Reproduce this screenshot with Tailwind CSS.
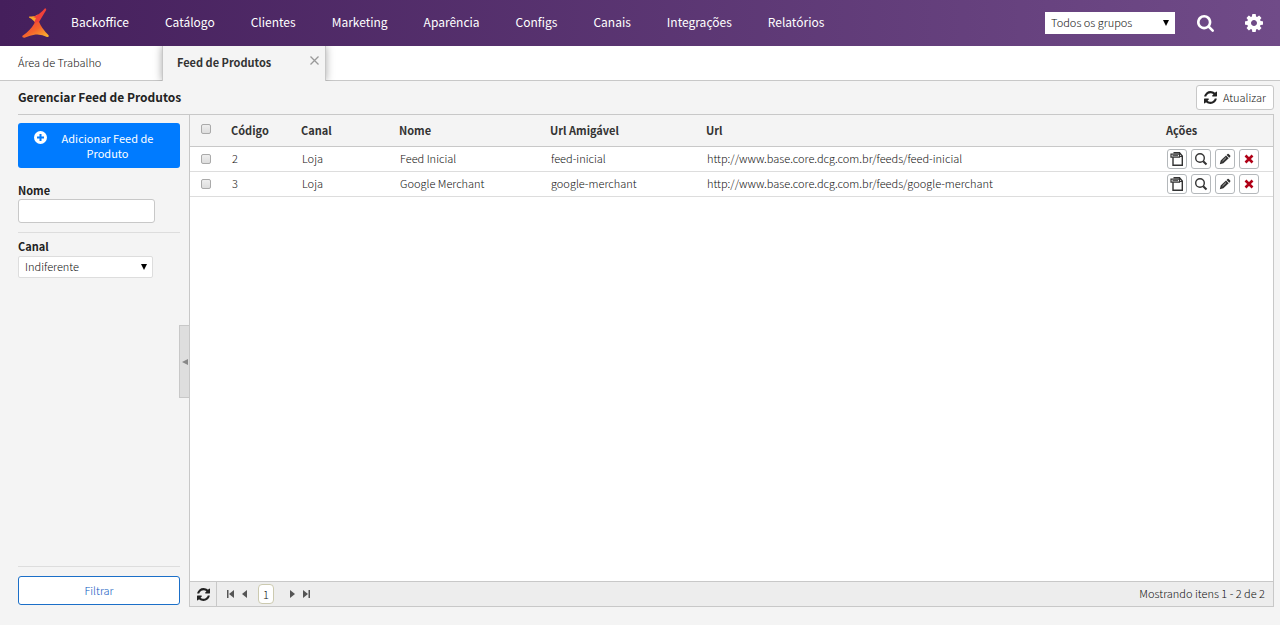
<!DOCTYPE html>
<html lang="pt-BR">
<head>
  <meta charset="UTF-8" />
  <meta name="viewport" content="width=device-width, initial-scale=1.0" />
  <title>Feed de Produtos - Backoffice</title>
  <script src="https://cdn.jsdelivr.net/npm/@tailwindcss/browser@4"></script>
</head>
<body class="flex flex-col h-screen bg-[#f4f4f4] text-[#111] text-[11px] leading-4 font-light font-['Noto_Sans_CJK_SC','Open_Sans',sans-serif]">

  <!-- Icons -->
  <svg class="hidden">
    <symbol id="refresh" viewBox="0 0 1536 1536">
      <path fill="currentColor" d="M1511 928q0 5-1 7-64 268-268 434.500T764 1536q-146 0-282.500-55T238 1324l-129 129q-19 19-45 19t-45-19-19-45V960q0-26 19-45t45-19h448q26 0 45 19t19 45-19 45l-137 137q71 66 161 102t187 36q134 0 250-65t186-179q11-17 53-117 8-23 30-23h192q13 0 22.500 9.500t9.500 22.500zm25-800v448q0 26-19 45t-45 19h-448q-26 0-45-19t-19-45 19-45l138-138Q969 256 768 256q-134 0-250 65T332 500q-11 17-53 117-8 23-30 23H50q-13 0-22.500-9.500T18 608v-7q65-268 270-434.500T768 0q146 0 284 55.500T1297 212l130-129q19-19 45-19t45 19 19 45z"/>
    </symbol>
    <symbol id="lens" viewBox="0 0 1664 1664">
      <path fill="currentColor" d="M1152 704q0-185-131.500-316.500T704 256 387.500 387.500 256 704t131.500 316.500T704 1152t316.500-131.500T1152 704zm512 832q0 52-38 90t-90 38q-54 0-90-38l-343-342q-179 124-399 124-143 0-273.500-55.500t-225-150-150-225T0 704t55.500-273.500 150-225 225-150T704 0t273.500 55.500 225 150 150 225T1408 704q0 220-124 399l343 343q37 37 37 90z"/>
    </symbol>
    <symbol id="gear" viewBox="0 0 1536 1536">
      <path fill="currentColor" d="M1024 768q0-106-75-181t-181-75-181 75-75 181 75 181 181 75 181-75 75-181zm512-109v222q0 12-8 23t-20 13l-185 28q-19 54-39 91 35 50 107 138 10 12 10 25t-9 23q-27 37-99 108t-94 71q-12 0-26-9l-138-108q-44 23-91 38-16 136-29 186-7 28-36 28H657q-14 0-24.500-8.500T621 1506l-28-184q-49-16-90-37l-141 107q-10 9-25 9-14 0-25-11-126-114-165-168-7-10-7-23 0-12 8-23 15-21 51-66.500t54-70.500q-27-50-41-99L29 913q-13-2-21-12.500T0 877V655q0-12 8-23t19-13l186-28q14-46 39-92-40-57-107-138-10-12-10-24 0-10 9-23 26-36 98.500-107.500T337 135q13 0 26 10l138 107q44-23 91-38 16-136 29-186 7-28 36-28h222q14 0 24.500 8.500T915 30l28 184q49 16 90 37l142-107q9-9 24-9 13 0 25 10 129 119 165 170 7 8 7 22 0 12-8 23-15 21-51 66.500t-54 70.500q26 50 41 98l183 28q13 2 21 12.500t8 23.500z"/>
    </symbol>
    <symbol id="page" viewBox="0 0 14 16">
      <path fill="none" stroke="currentColor" stroke-width="1.400" d="M3 6v8.300h9.300V5L9.500 1.700H3.500"/>
      <path fill="#fff" stroke="currentColor" stroke-width="1.200" d="M1 3.200h8.500v3H1z"/>
      <path fill="none" stroke="currentColor" d="M9.500 2v3.500h3M2.500 4.700h5.500"/>
    </symbol>
    <symbol id="search" viewBox="0 0 14 14">
      <circle cx="6" cy="6" r="4.300" fill="none" stroke="currentColor" stroke-width="1.400"/>
      <path stroke="currentColor" stroke-width="2" d="M9.200 9.200l3.300 3.300"/>
    </symbol>
    <symbol id="pencil" viewBox="0 0 14 14">
      <path fill="currentColor" d="M1.800 12.200l.9-3.600 5.300-5 2.700 2.700-5.300 5zM8.600 3l.9-.9q.6-.5 1.200 0l1.500 1.500q.5.600 0 1.200l-.9.900z"/>
      <path stroke="#fff" stroke-width=".6" d="M4.500 9l3.500-3.400"/>
    </symbol>
    <symbol id="cross" viewBox="0 0 10 10">
      <path fill="none" stroke="currentColor" stroke-width="2.600" d="M1.500 1.500l7 7M8.500 1.500l-7 7"/>
    </symbol>
  </svg>

  <header class="flex items-center h-[46px] shrink-0 pl-[22px] pr-[17px] bg-linear-to-r from-[#451f5c] to-[#704b88] text-white">
    <a href="#" aria-label="Início" class="shrink-0">
      <svg class="w-7 h-[30px]" viewBox="0 0 28 30">
        <defs>
          <linearGradient id="flame" x1="0" y1="0" x2="1" y2="1">
            <stop offset="0" stop-color="#f03a3a"/><stop offset=".5" stop-color="#f4652c"/><stop offset="1" stop-color="#fdc02f"/>
          </linearGradient>
        </defs>
        <path fill="#f9a72b" d="M7 9.500q-.5-1 .8-1Q13 9 16 6.500L14 16q-2-4-7-6.500z"/>
        <path fill="#f0413a" d="M23 .3q1.600 0 1.200 1.800L17 14l-4 4-.5-4.500 1.500-3.500-3-1Q18 6.500 23 .3z"/>
        <path fill="url(#flame)" d="M13 14.500L17 13.800q2.500 6.500 9.600 13.500 1 2-1.600 1.700-5-3-11.500-2.500-5.500 1-11 3.300Q0 30 .2 28 8 23 13 14.500z"/>
      </svg>
    </a>
    <nav class="flex gap-9 ml-[21px] pb-0.5 text-[12px] font-normal whitespace-nowrap">
      <a href="#">Backoffice</a>
      <a href="#">Catálogo</a>
      <a href="#">Clientes</a>
      <a href="#">Marketing</a>
      <a href="#">Aparência</a>
      <a href="#">Configs</a>
      <a href="#">Canais</a>
      <a href="#">Integrações</a>
      <a href="#">Relatórios</a>
    </nav>
    <div class="relative ml-auto text-[#111]">
      <select aria-label="Grupo" class="block appearance-none w-[130px] h-[22px] px-1.5 pb-0.5 bg-white">
        <option>Todos os grupos</option>
      </select>
      <svg class="absolute right-1.5 top-2 w-[6px] h-[6px] text-black pointer-events-none" viewBox="0 0 6 6"><path d="M0 0h6L3 6z"/></svg>
    </div>
    <button class="ml-[22px]" aria-label="Buscar"><svg class="size-[17px]"><use href="#lens"/></svg></button>
    <button class="ml-[31px]" aria-label="Configurações"><svg class="size-[18px]"><use href="#gear"/></svg></button>
  </header>

  <!-- Tabs -->
  <div class="flex h-[35px] shrink-0 bg-white leading-8">
    <a href="#" class="w-[162px] pl-[18px] border-b border-[#c8c8c8]">Área de Trabalho</a>
    <div class="flex justify-between w-[164px] pl-3.5 pr-1.5 bg-[#f4f4f4] border-x border-[#c8c8c8] shadow-[0_0_8px_rgba(0,0,0,0.35)] [clip-path:inset(0_-10px)]">
      <a href="#" class="font-bold text-[#333]">Feed de Produtos</a>
      <button aria-label="Fechar" class="self-start mt-2.5">
        <svg class="size-[9px]" viewBox="0 0 9 9"><path stroke="#999" stroke-width="1.300" d="M.5.5l8 8M8.500.5l-8 8"/></svg>
      </button>
    </div>
    <div class="grow border-b border-[#c8c8c8]"></div>
  </div>

  <main class="flex flex-col grow min-h-0 pl-[18px] pr-1.5 pb-[18px]">
    <div class="flex items-center justify-between h-[33px] shrink-0">
      <h1 class="pb-0.5 text-[12px] font-bold text-[#222]">Gerenciar Feed de Produtos</h1>
      <button class="flex items-center gap-1.5 h-[25px] px-[7px] bg-white border border-[#c8c8c8] rounded-[3px]">
        <svg class="size-[13px] text-[#222]"><use href="#refresh"/></svg>
        <span class="pb-px">Atualizar</span>
      </button>
    </div>

    <div class="flex grow min-h-0 border-t border-[#c8c8c8]">
      <!-- Filters -->
      <form class="relative flex flex-col w-[171px] shrink-0 pr-[9px] pt-2 pb-0.5">
        <button type="button" class="flex h-[45px] shrink-0 pl-4 pr-3 pt-2 bg-[#007bff] text-white font-normal leading-[15px] rounded-[3px]">
          <svg class="size-[13px] shrink-0" viewBox="0 0 13 13"><circle cx="6.500" cy="6.500" r="6.500" fill="#fff"/><path stroke="#007bff" stroke-width="2" d="M6.500 3v7M3 6.500h7"/></svg>
          <span class="grow px-3">Adicionar Feed de Produto</span>
        </button>
        <label for="nome" class="mt-3.5 font-bold text-[#222]">Nome</label>
        <input id="nome" type="text" class="w-[137px] h-6 mt-px px-1.5 bg-white border border-[#c8c8c8] rounded-[3px]" />
        <hr class="mt-[9px] mb-[5px] border-[#ddd]" />
        <label for="canal" class="font-bold text-[#222]">Canal</label>
        <div class="relative w-[135px] mt-0.5">
          <select id="canal" class="block appearance-none w-full h-[22px] px-1.5 pb-0.5 bg-white border border-[#ddd] rounded-xs">
            <option>Indiferente</option>
          </select>
          <svg class="absolute right-1.5 top-2 w-[6px] h-[6px] text-black pointer-events-none" viewBox="0 0 6 6"><path d="M0 0h6L3 6z"/></svg>
        </div>
        <hr class="mt-auto mb-[9px] border-[#ddd]" />
        <button type="button" class="h-[29px] shrink-0 pb-0.5 bg-white border border-[#1b6fc8] text-[#0c58c0] rounded-[3px]">Filtrar</button>
        <button type="button" aria-label="Recolher filtros" class="absolute -right-px top-[210px] grid place-items-center w-[11px] h-[73px] bg-[#dedede] border border-[#c8c8c8]">
          <svg class="size-[6px]" viewBox="0 0 6 6"><path fill="#888" d="M6 0v6L0 3z"/></svg>
        </button>
      </form>

      <section class="flex flex-col grow min-w-0 bg-white border border-t-0 border-[#c8c8c8]">
        <table class="w-full table-fixed text-left">
          <colgroup>
            <col class="w-[33px]" /><col class="w-[70px]" /><col class="w-[98px]" /><col class="w-[151px]" /><col class="w-[156px]" /><col /><col class="w-[115px]" />
          </colgroup>
          <thead class="bg-[#f4f4f4] text-[#333]">
            <tr class="h-[31px] border-b border-[#c8c8c8]">
              <th class="pl-[11px]"><input type="checkbox" aria-label="Selecionar todos" class="block appearance-none size-2.5 mb-[3px] bg-linear-to-b from-[#eee] to-[#ddd] border border-[#aaa] rounded-xs" /></th>
              <th class="pl-2">Código</th>
              <th class="pl-2">Canal</th>
              <th class="pl-2">Nome</th>
              <th class="pl-2">Url Amigável</th>
              <th class="pl-2">Url</th>
              <th class="pl-2">Ações</th>
            </tr>
          </thead>
          <tbody id="rows"></tbody>
        </table>

        <!-- Pager -->
        <div class="flex items-center h-[25px] shrink-0 mt-auto bg-[#ededed] border-t border-[#c8c8c8]">
          <button aria-label="Atualizar lista" class="grid place-items-center w-[27px] h-full border-r border-[#c8c8c8] text-[#222]"><svg class="size-[13px]"><use href="#refresh"/></svg></button>
          <button aria-label="Primeira" class="ml-2.5"><svg class="w-[7px] h-2" viewBox="0 0 7 8"><path fill="#555" d="M0 0h1.500v8H0zM7 0v8L2 4z"/></svg></button>
          <button aria-label="Anterior" class="ml-2"><svg class="w-[5px] h-2" viewBox="0 0 5 8"><path fill="#555" d="M5 0v8L0 4z"/></svg></button>
          <span class="grid place-items-center w-4 h-5 ml-[11px] bg-white border border-[#cccab0] rounded-[4px]">1</span>
          <button aria-label="Próxima" class="ml-4"><svg class="w-[5px] h-2" viewBox="0 0 5 8"><path fill="#555" d="M0 0v8l5-4z"/></svg></button>
          <button aria-label="Última" class="ml-2"><svg class="w-[7px] h-2" viewBox="0 0 7 8"><path fill="#555" d="M5.500 0H7v8H5.500zM0 0v8l5-4z"/></svg></button>
          <span class="ml-auto mr-2 pb-0.5">Mostrando itens 1 - 2 de 2</span>
        </div>
      </section>
    </div>
  </main>

  <script>
    const baseUrl = "http://www.base.core.dcg.com.br/feeds/";
    const feeds = [
      { id: 2, canal: "Loja", nome: "Feed Inicial", slug: "feed-inicial" },
      { id: 3, canal: "Loja", nome: "Google Merchant", slug: "google-merchant" }
    ];

    const actionClass = "grid place-items-center size-5 bg-white border border-[#b4b8bb] rounded-[3px] text-[#333]";

    document.getElementById("rows").innerHTML = feeds.map((feed) => `
      <tr class="h-[25px] border-b border-[#ddd]">
        <td class="pl-[11px]"><input type="checkbox" aria-label="Selecionar ${feed.nome}" class="block appearance-none size-2.5 bg-linear-to-b from-[#eee] to-[#ddd] border border-[#aaa] rounded-xs" /></td>
        <td class="pl-[9px] pb-px">${feed.id}</td>
        <td class="pl-[9px] pb-px">${feed.canal}</td>
        <td class="pl-[9px] pb-px">${feed.nome}</td>
        <td class="pl-[9px] pb-px">${feed.slug}</td>
        <td class="pl-[9px] pb-px">${baseUrl}${feed.slug}</td>
        <td class="pl-[9px]">
          <div class="flex gap-1">
            <button class="${actionClass}" aria-label="Copiar"><svg class="w-3.5 h-4"><use href="#page"/></svg></button>
            <button class="${actionClass}" aria-label="Visualizar"><svg class="size-3.5"><use href="#search"/></svg></button>
            <button class="${actionClass}" aria-label="Editar"><svg class="size-3.5"><use href="#pencil"/></svg></button>
            <button class="${actionClass}" aria-label="Excluir"><svg class="size-2.5 text-[#b00016]"><use href="#cross"/></svg></button>
          </div>
        </td>
      </tr>
    `).join("");
  </script>
</body>
</html>
